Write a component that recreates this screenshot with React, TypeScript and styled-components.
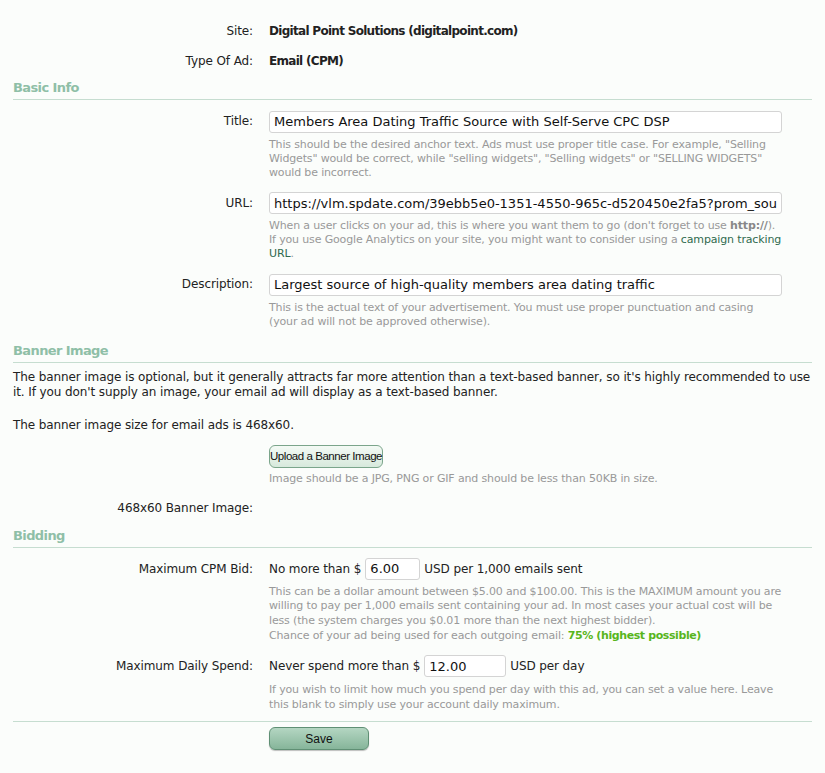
import styled, { createGlobalStyle } from "styled-components";

const GlobalStyle = createGlobalStyle`
  html, body {
    margin: 0;
    padding: 0;
    background: #fbfdfb;
  }
  body {
    font-family: "DejaVu Sans", Verdana, sans-serif;
    font-size: 12px;
    letter-spacing: -0.1px;
    color: #222;
  }
`;

const PageS = styled.div`
  width: 799px;
  padding: 16px 13px 20px;
`;

const RowS = styled.div<{ $top?: number }>`
  display: grid;
  grid-template-columns: 240px 513px;
  column-gap: 16px;
  margin-top: ${(p) => p.$top ?? 0}px;
`;

const LabelS = styled.div<{ $lh?: number }>`
  text-align: right;
  line-height: ${(p) => p.$lh ?? 22}px;
`;

const ValueS = styled.div<{ $lh?: number }>`
  line-height: ${(p) => p.$lh ?? 22}px;
`;

const StrongS = styled.span`
  font-weight: bold;
  letter-spacing: -0.7px;
`;

const CodeS = styled.span`
  font-weight: bold;
  color: #888;
`;

const SectionTitleS = styled.h2<{ $top: number }>`
  margin: ${(p) => p.$top}px 0 0;
  padding-bottom: 2px;
  font-size: 13px;
  letter-spacing: -0.6px;
  line-height: 18px;
  font-weight: bold;
  color: #8fbfa7;
  border-bottom: 1px solid #c6ddd0;
`;

const TextInputS = styled.input<{ $width: number }>`
  box-sizing: border-box;
  width: ${(p) => p.$width}px;
  height: 22px;
  padding: 0 4px;
  border: 1px solid #d4d4d4;
  border-radius: 3px;
  background: #fff;
  font-family: inherit;
  font-size: 13px;
  color: #111;
  vertical-align: middle;
`;

const HelpS = styled.div<{ $lh?: number; $top?: number }>`
  margin-top: ${(p) => p.$top ?? 5}px;
  color: #999;
  font-size: 11px;
  letter-spacing: -0.15px;
  line-height: ${(p) => p.$lh ?? 14}px;
`;

const LinkS = styled.a`
  color: #2f6a4e;
  text-decoration: none;
`;

const GreenS = styled.span`
  color: #58b51c;
  font-weight: bold;
  letter-spacing: -0.4px;
`;

const ParagraphS = styled.p<{ $top: number }>`
  margin: ${(p) => p.$top}px 0 0;
  line-height: 15px;
`;

const InlineFieldS = styled.div`
  display: flex;
  align-items: center;
  gap: 4px;
  height: 22px;
`;

const ButtonS = styled.button<{ $variant: "light" | "save"; $width: number }>`
  display: block;
  box-sizing: border-box;
  width: ${(p) => p.$width}px;
  height: 23px;
  padding: 0;
  white-space: nowrap;
  border-radius: 6px;
  font-family: "Liberation Sans", Arial, sans-serif;
  font-size: ${(p) => (p.$variant === "save" ? 12 : 11.5)}px;
  letter-spacing: ${(p) => (p.$variant === "save" ? 0 : -0.45)}px;
  color: #111;
  cursor: pointer;
  border: 1px solid ${(p) => (p.$variant === "save" ? "#5f8f74" : "#7ba58b")};
  background: ${(p) =>
    p.$variant === "save"
      ? "linear-gradient(#b4d6c2, #86b59a)"
      : "linear-gradient(#f4faf5, #d7e9dc)"};
  box-shadow: ${(p) =>
    p.$variant === "save" ? "0 1px 1px rgba(0,0,0,0.25)" : "none"};
`;

const DividerS = styled.div<{ $top: number }>`
  margin-top: ${(p) => p.$top}px;
  border-top: 1px solid #c6ddd0;
`;

export default function App() {
  return (
    <>
      <GlobalStyle />
      <PageS>
        <RowS>
          <LabelS $lh={30}>Site:</LabelS>
          <ValueS $lh={30}>
            <StrongS>Digital Point Solutions (digitalpoint.com)</StrongS>
          </ValueS>
        </RowS>
        <RowS>
          <LabelS $lh={30}>Type Of Ad:</LabelS>
          <ValueS $lh={30}>
            <StrongS>Email (CPM)</StrongS>
          </ValueS>
        </RowS>

        <SectionTitleS $top={3}>Basic Info</SectionTitleS>

        <RowS $top={10}>
          <LabelS>Title:</LabelS>
          <ValueS>
            <TextInputS
              $width={513}
              defaultValue="Members Area Dating Traffic Source with Self-Serve CPC DSP"
            />
            <HelpS>
              This should be the desired anchor text. Ads must use proper title
              case. For example, "Selling Widgets" would be correct, while
              "selling widgets", "Selling widgets" or "SELLING WIDGETS" would be
              incorrect.
            </HelpS>
          </ValueS>
        </RowS>

        <RowS $top={12}>
          <LabelS>URL:</LabelS>
          <ValueS>
            <TextInputS
              $width={513}
              defaultValue="https://vlm.spdate.com/39ebb5e0-1351-4550-965c-d520450e2fa5?prom_source=bd_digitalpoint"
            />
            <HelpS>
              When a user clicks on your ad, this is where you want them to go
              (don't forget to use <CodeS>http://</CodeS>). If you use Google
              Analytics on your site, you might want to consider using a{" "}
              <LinkS href="#">campaign tracking URL</LinkS>.
            </HelpS>
          </ValueS>
        </RowS>

        <RowS $top={12}>
          <LabelS>Description:</LabelS>
          <ValueS>
            <TextInputS
              $width={513}
              defaultValue="Largest source of high-quality members area dating traffic"
            />
            <HelpS>
              This is the actual text of your advertisement. You must use proper
              punctuation and casing (your ad will not be approved otherwise).
            </HelpS>
          </ValueS>
        </RowS>

        <SectionTitleS $top={13}>Banner Image</SectionTitleS>

        <ParagraphS $top={7}>
          The banner image is optional, but it generally attracts far more
          attention than a text-based banner, so it's highly recommended to use
          it. If you don't supply an image, your email ad will display as a
          text-based banner.
        </ParagraphS>
        <ParagraphS $top={18}>
          The banner image size for email ads is 468x60.
        </ParagraphS>

        <RowS $top={12}>
          <div />
          <ValueS>
            <ButtonS $variant="light" $width={114}>
              Upload a Banner Image
            </ButtonS>
            <HelpS $lh={15} $top={3}>
              Image should be a JPG, PNG or GIF and should be less than 50KB in
              size.
            </HelpS>
          </ValueS>
        </RowS>

        <RowS $top={11}>
          <LabelS>468x60 Banner Image:</LabelS>
          <ValueS />
        </RowS>

        <SectionTitleS $top={8}>Bidding</SectionTitleS>

        <RowS $top={10}>
          <LabelS>Maximum CPM Bid:</LabelS>
          <ValueS>
            <InlineFieldS>
              No more than $
              <TextInputS $width={55} defaultValue="6.00" />
              USD per 1,000 emails sent
            </InlineFieldS>
            <HelpS $lh={14.7}>
              This can be a dollar amount between $5.00 and $100.00. This is
              the MAXIMUM amount you are willing to pay per 1,000 emails sent
              containing your ad. In most cases your actual cost will be less
              (the system charges you $0.01 more than the next highest bidder).
              <br />
              Chance of your ad being used for each outgoing email:{" "}
              <GreenS>75% (highest possible)</GreenS>
            </HelpS>
          </ValueS>
        </RowS>

        <RowS $top={12}>
          <LabelS>Maximum Daily Spend:</LabelS>
          <ValueS>
            <InlineFieldS>
              Never spend more than $
              <TextInputS $width={82} defaultValue="12.00" />
              USD per day
            </InlineFieldS>
            <HelpS $lh={15}>
              If you wish to limit how much you spend per day with this ad, you
              can set a value here. Leave this blank to simply use your account
              daily maximum.
            </HelpS>
          </ValueS>
        </RowS>

        <DividerS $top={9} />

        <RowS $top={5}>
          <div />
          <div>
            <ButtonS $variant="save" $width={100}>
              Save
            </ButtonS>
          </div>
        </RowS>
      </PageS>
    </>
  );
}
